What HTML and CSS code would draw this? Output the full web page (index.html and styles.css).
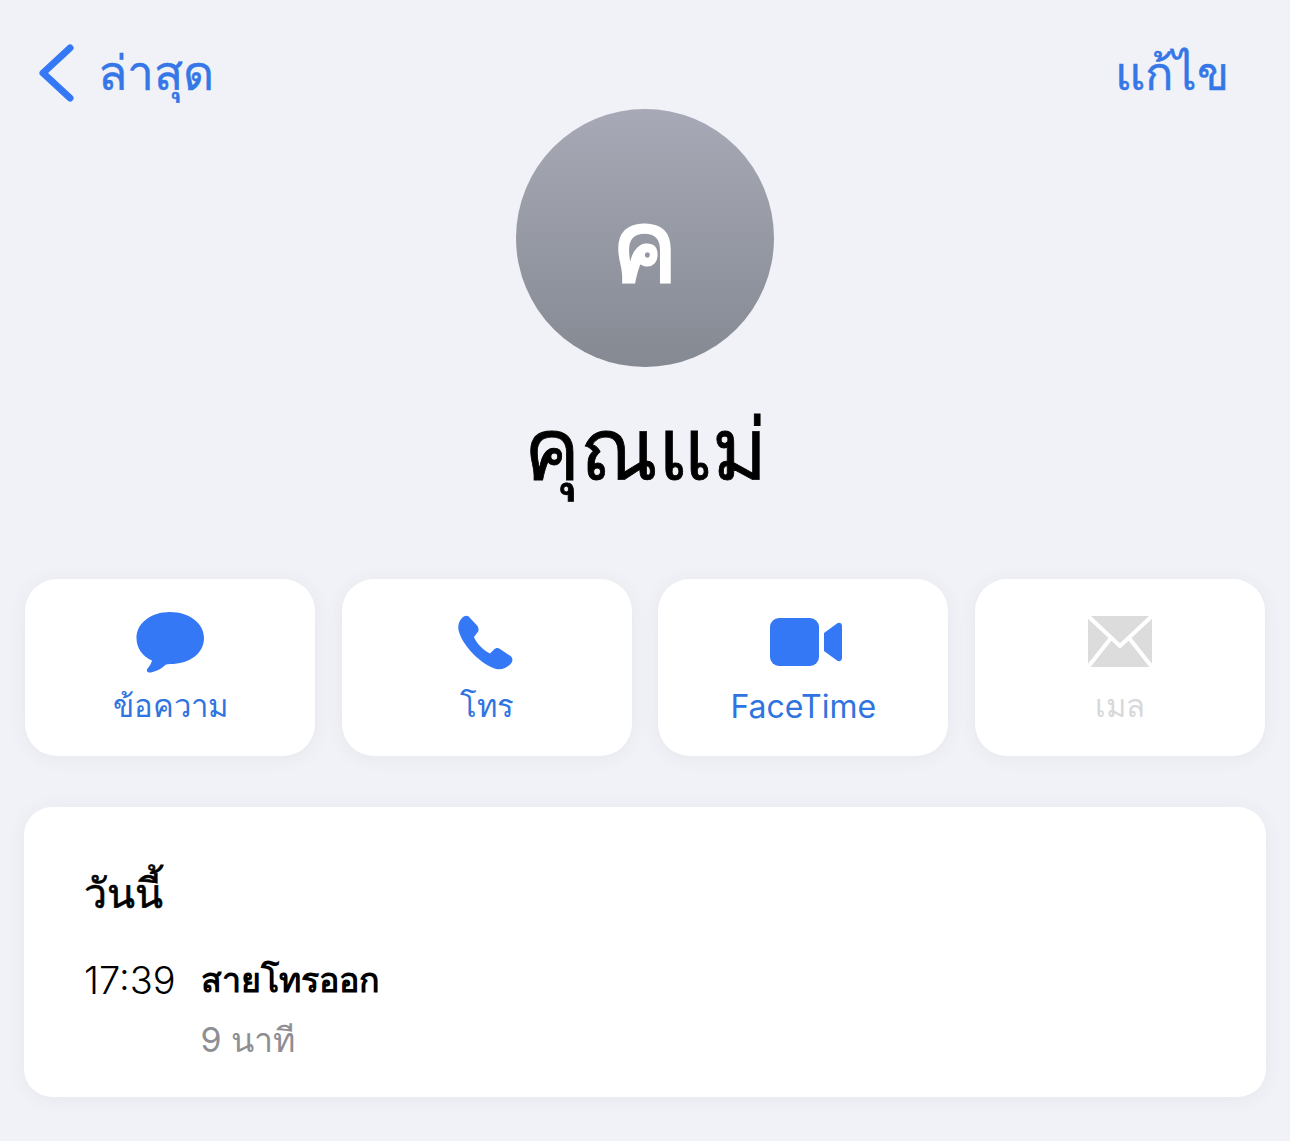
FILE: index.html
```html
<!DOCTYPE html>
<html lang="th">
<head>
    <meta charset="UTF-8" />
    <meta name="viewport" content="width=device-width, initial-scale=1.0" />
    <title>คุณแม่</title>
    <link rel="stylesheet" href="styles.css">
</head>
<body>
    <header class="topbar">
        <a class="back">
            <svg class="chevron" viewBox="0 0 38 60" aria-hidden="true">
                <path d="M32 5 L5 30 L32 55" />
            </svg>
            <span>ล่าสุด</span>
        </a>
        <a class="edit">แก้ไข</a>
    </header>

    <section class="profile">
        <div class="avatar"><span>ค</span></div>
        <h1>คุณแม่</h1>
    </section>

    <nav class="actions">
        <a class="action">
            <svg class="icon" viewBox="0 0 72 62" aria-hidden="true">
                <path d="M36 0 C55 0 70 11 70 26 C70 42 55 52 36 52 L32 52.500 C28 56 24 59 17 60.500 C13 61 12 58.500 13.500 56.500 C15.500 54.500 17.500 51 18 48.500 C8 44 2.500 36 2.500 26 C2.500 11 17 0 36 0Z" />
            </svg>
            <span>ข้อความ</span>
        </a>
        <a class="action">
            <svg class="icon" viewBox="0 0 72 62" aria-hidden="true">
                <path transform="translate(6 2)" d="M5 4 C8 1 11 1 13 4 L20.500 12 C22 15 22 17 20 19 L17 23 C19 29 27 37 33 39.500 L37 35.500 C39 33.500 41 33.500 43 35 L53.500 42 C56 44 56 47 54 49.500 C50 54 45 56 39 55 C25 51 5 32 1.500 16 C0.800 11 2 7 5 4Z" />
            </svg>
            <span>โทร</span>
        </a>
        <a class="action">
            <svg class="icon" viewBox="-3 -6 72 62" aria-hidden="true">
                <rect x="0" y="0" width="49" height="48" rx="9" />
                <path d="M54 15 L67 5.500 C69 4 72 5 72 8 L72 40 C72 43 69 44 67 42.500 L54 33Z" />
            </svg>
            <span class="latin">FaceTime</span>
        </a>
        <a class="action disabled">
            <svg class="icon" viewBox="-4 -4 72 62" aria-hidden="true">
                <rect x="0" y="0" width="64" height="51" />
                <path class="flap" d="M0 0 L32 30 L64 0 M0 51 L23 22 M64 51 L41 22" />
            </svg>
            <span>เมล</span>
        </a>
    </nav>

    <section class="calls">
        <h2>วันนี้</h2>
        <div class="call">
            <time>17:39</time>
            <div class="call-info">
                <strong>สายโทรออก</strong>
                <span>9 นาที</span>
            </div>
        </div>
    </section>
</body>
</html>
```

FILE: styles.css
```css
* {
  box-sizing: border-box;
}

body {
  margin: 0;
  padding: 0 25px;
  height: 1141px;
  overflow: hidden;
  background-color: #f1f2f7;
  font-family: 'Inter', 'Noto Sans', 'DejaVu Sans', sans-serif;
  color: #000;
}

.topbar {
  display: flex;
  justify-content: space-between;
  align-items: center;
  height: 109px;
  padding: 36px 36px 0 13px;
  font-size: 48px;
  line-height: 72px;
  color: #3577e6;
  -webkit-text-stroke: 0.4px #3577e6;
}

.edit {
  font-size: 47px;
}

.back {
  display: flex;
  align-items: center;
  gap: 22px;
}

.chevron {
  width: 38px;
  height: 60px;
}

.chevron path {
  fill: none;
  stroke: #3478f6;
  stroke-width: 7;
  stroke-linecap: round;
  stroke-linejoin: round;
}

.profile {
  display: flex;
  flex-direction: column;
  align-items: center;
}

.avatar {
  display: flex;
  align-items: center;
  justify-content: center;
  width: 258px;
  height: 258px;
  padding-top: 16px;
  border-radius: 50%;
  background: linear-gradient(#a7aab6, #858992);
  color: #fff;
  font-size: 98px;
  font-weight: 700;
}

h1 {
  margin: 22px 0 0;
  font-size: 84px;
  line-height: 120px;
  font-weight: 500;
  -webkit-text-stroke: 0.8px #000;
}

.actions {
  display: grid;
  grid-template-columns: repeat(4, 290px);
  justify-content: space-between;
  margin-top: 70px;
}

.action {
  display: flex;
  flex-direction: column;
  align-items: center;
  height: 177px;
  padding-top: 33px;
  border-radius: 32px;
  background-color: #fff;
  box-shadow: 0 2px 20px rgba(60, 60, 80, 0.06);
  color: #2f74e0;
  font-size: 31px;
  line-height: 44px;
}

.action .latin {
  font-size: 32px;
  padding-top: 1px;
}

.action .icon {
  width: 72px;
  height: 62px;
  margin-bottom: 10px;
  overflow: visible;
  fill: #3478f6;
}

.action.disabled {
  color: #d8d8da;
}

.action.disabled .icon {
  fill: #dcdcdd;
}

.action.disabled .flap {
  fill: none;
  stroke: #fff;
  stroke-width: 4;
}

.calls {
  margin: 51px -1px 0;
  height: 290px;
  padding: 48px 60px;
  border-radius: 28px;
  background-color: #fff;
  box-shadow: 0 2px 20px rgba(60, 60, 80, 0.06);
}

h2 {
  margin: 0;
  font-size: 41px;
  line-height: 76px;
  font-weight: 500;
  -webkit-text-stroke: 0.6px #000;
}

.call {
  display: flex;
  gap: 25px;
  margin-top: 19px;
  font-size: 38px;
  line-height: 60px;
}

time {
  font-weight: 350;
}

.call-info {
  display: flex;
  flex-direction: column;
}

.call-info strong {
  font-size: 34px;
  font-weight: 600;
}

.call-info span {
  font-size: 34px;
  color: #8e8e93;
}
```
